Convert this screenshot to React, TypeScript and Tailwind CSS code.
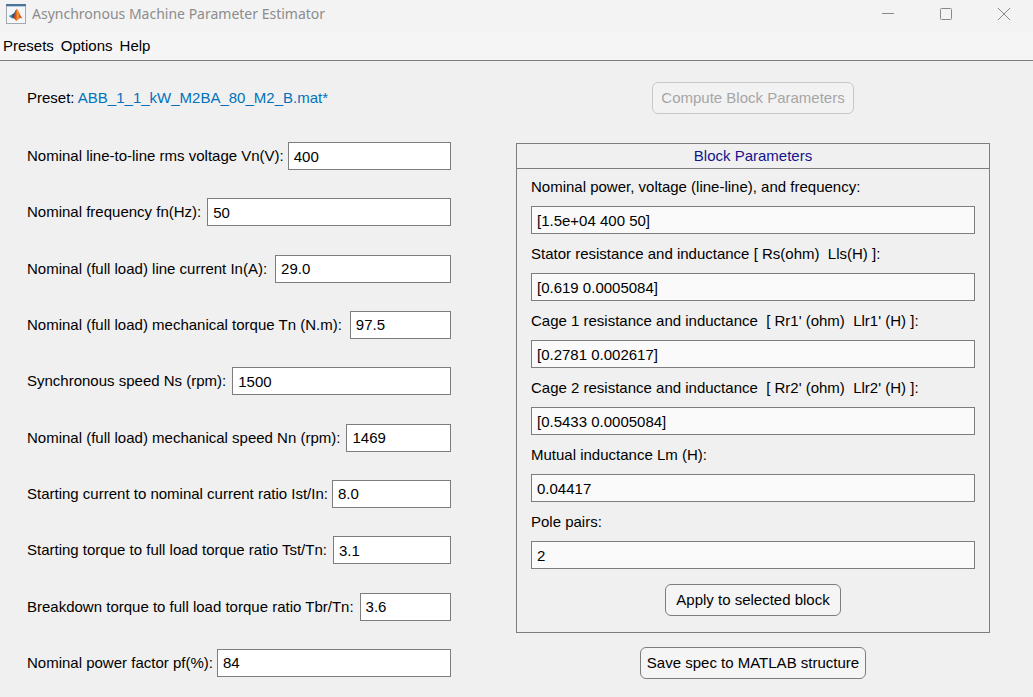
import { useId } from "react";

type Field = { label: string; value: string; gap: string };

const machineFields: Field[] = [
  { label: "Nominal line-to-line rms voltage Vn(V):", value: "400", gap: "gap-1" },
  { label: "Nominal frequency fn(Hz):", value: "50", gap: "gap-1.5" },
  { label: "Nominal (full load) line current In(A):", value: "29.0", gap: "gap-2" },
  { label: "Nominal (full load) mechanical torque Tn (N.m):", value: "97.5", gap: "gap-2" },
  { label: "Synchronous speed Ns (rpm):", value: "1500", gap: "gap-1.5" },
  { label: "Nominal (full load) mechanical speed Nn (rpm):", value: "1469", gap: "gap-1.5" },
  { label: "Starting current to nominal current ratio Ist/In:", value: "8.0", gap: "gap-1" },
  { label: "Starting torque to full load torque ratio Tst/Tn:", value: "3.1", gap: "gap-1.5" },
  { label: "Breakdown torque to full load torque ratio Tbr/Tn:", value: "3.6", gap: "gap-1.5" },
  { label: "Nominal power factor pf(%):", value: "84", gap: "gap-1" },
];

const blockFields = [
  { label: "Nominal power, voltage (line-line), and frequency:", value: "[1.5e+04 400 50]" },
  { label: "Stator resistance and inductance [ Rs(ohm)  Lls(H) ]:", value: "[0.619 0.0005084]" },
  { label: "Cage 1 resistance and inductance  [ Rr1' (ohm)  Llr1' (H) ]:", value: "[0.2781 0.002617]" },
  { label: "Cage 2 resistance and inductance  [ Rr2' (ohm)  Llr2' (H) ]:", value: "[0.5433 0.0005084]" },
  { label: "Mutual inductance Lm (H):", value: "0.04417" },
  { label: "Pole pairs:", value: "2" },
];

function AppIcon() {
  return (
    <svg width="20" height="20" viewBox="0 0 20 20" aria-hidden="true">
      <defs>
        <linearGradient id="peak" x1="0" x2="1" y1="0" y2="0">
          <stop offset="0" stopColor="#8a2412" />
          <stop offset="0.35" stopColor="#d9541e" />
          <stop offset="0.55" stopColor="#f3a02c" />
          <stop offset="0.75" stopColor="#dd5a1c" />
          <stop offset="1" stopColor="#a82c12" />
        </linearGradient>
      </defs>
      <rect x="0.5" y="0.5" width="19" height="19" fill="#f4f6f9" stroke="#a4a9b0" />
      <rect x="0" y="0" width="20" height="2" fill="#4d7396" />
      <rect x="1" y="2" width="18" height="1" fill="#b9cbdc" />
      <path d="M2.600 11.900 6.800 10l2.100 1.700-2.900 2.700Z" fill="#4a97cc" />
      <path d="M6.800 10c1.700-.2 2.200-3.400 4-4.900l-.6 5-3 3.700L5.500 13Z" fill="#2a4d7c" />
      <path d="M6 14.400C8.800 13.300 9 7 10.900 4.700c2.100 2 3.200 7.200 5.600 9.900-1.600-1-2.600-1-3.700.3-.9 1-1.700 1.700-2.900 1.900-.7-1.900-2-2.800-3.900-2.400Z" fill="url(#peak)" />
    </svg>
  );
}

function MachineRow({ label, value, gap }: Field) {
  const id = useId();
  return (
    <div className={`flex items-center ${gap}`}>
      <label htmlFor={id} className="shrink-0 whitespace-pre">{label}</label>
      <input
        id={id}
        defaultValue={value}
        className="h-7 w-0 min-w-0 flex-1 border border-[#7d7d7d] bg-white px-[5px] outline-none"
      />
    </div>
  );
}

function BlockRow({ label, value }: { label: string; value: string }) {
  const id = useId();
  return (
    <div className="flex flex-col gap-[9px]">
      <label htmlFor={id} className="whitespace-pre">{label}</label>
      <input
        id={id}
        readOnly
        defaultValue={value}
        className="h-7 w-full border border-[#7d7d7d] bg-[#fafafa] px-[5px] outline-none"
      />
    </div>
  );
}

export default function App() {
  return (
    <div className="flex min-h-screen flex-col bg-[#f0f0f0] font-['Liberation_Sans',Arial,sans-serif] text-[15px] leading-5 text-black">
      <header className="flex h-[33px] items-start justify-between bg-[#f3f3f3] pl-1.5">
        <div className="flex h-7 items-center gap-1.5">
          <AppIcon />
          <h1 className="font-['Noto_Sans','Open_Sans',sans-serif] text-sm text-[#8c8c8c]">
            Asynchronous Machine Parameter Estimator
          </h1>
        </div>
        <div className="flex text-[#8a8a8a]">
          <button type="button" aria-label="Minimize" className="flex h-7 w-[58px] items-center justify-center">
            <svg width="12" height="12" viewBox="0 0 12 12" fill="none" stroke="currentColor">
              <path d="M0 5.500h12" />
            </svg>
          </button>
          <button type="button" aria-label="Maximize" className="flex h-7 w-[58px] items-center justify-center">
            <svg width="12" height="12" viewBox="0 0 12 12" fill="none" stroke="currentColor">
              <rect x="0.500" y="0.500" width="11" height="11" rx="1" />
            </svg>
          </button>
          <button type="button" aria-label="Close" className="flex h-7 w-[58px] items-center justify-center">
            <svg width="12" height="12" viewBox="0 0 12 12" fill="none" stroke="currentColor">
              <path d="M0 0l12 12M12 0L0 12" />
            </svg>
          </button>
        </div>
      </header>

      <nav className="flex h-7 items-start gap-[7px] border-b border-[#7d7d7d] bg-[#f5f5f5] pt-[3px] pl-[3px]">
        <button type="button">Presets</button>
        <button type="button">Options</button>
        <button type="button">Help</button>
      </nav>

      <main className="grid grid-cols-[424fr_474fr] gap-x-[65px] pt-[21px] pr-[43px] pb-[18px] pl-[27px]">
        <section className="flex flex-col gap-[30px] pt-0.5 pb-0.5">
          <p className="leading-7">
            Preset: <a href="#preset" className="text-[#0072bd]">ABB_1_1_kW_M2BA_80_M2_B.mat*</a>
          </p>
          <div className="flex flex-1 flex-col justify-between">
            {machineFields.map((f) => (
              <MachineRow key={f.label} {...f} />
            ))}
          </div>
        </section>

        <section className="flex flex-col items-center">
          <button
            type="button"
            disabled
            className="h-8 rounded-md border border-[#c8c8c8] bg-[#f2f2f2] px-2 text-[#a6a6a6]"
          >
            Compute Block Parameters
          </button>

          <div className="mt-[29px] w-full border border-[#7d7d7d]">
            <h2 className="border-b border-[#7d7d7d] pt-0.5 pb-0.5 text-center text-[#14148c]">Block Parameters</h2>
            <div className="flex flex-col items-center gap-[15px] px-3.5 pt-2 pb-4">
              <div className="flex w-full flex-col gap-2.5">
                {blockFields.map((f) => (
                  <BlockRow key={f.label} {...f} />
                ))}
              </div>
              <button type="button" className="h-8 rounded-md border border-[#7d7d7d] bg-[#f5f5f5] px-2.5">
                Apply to selected block
              </button>
            </div>
          </div>

          <button type="button" className="mt-3.5 h-8 rounded-md border border-[#7d7d7d] bg-[#f5f5f5] px-1.5">
            Save spec to MATLAB structure
          </button>
        </section>
      </main>
    </div>
  );
}
